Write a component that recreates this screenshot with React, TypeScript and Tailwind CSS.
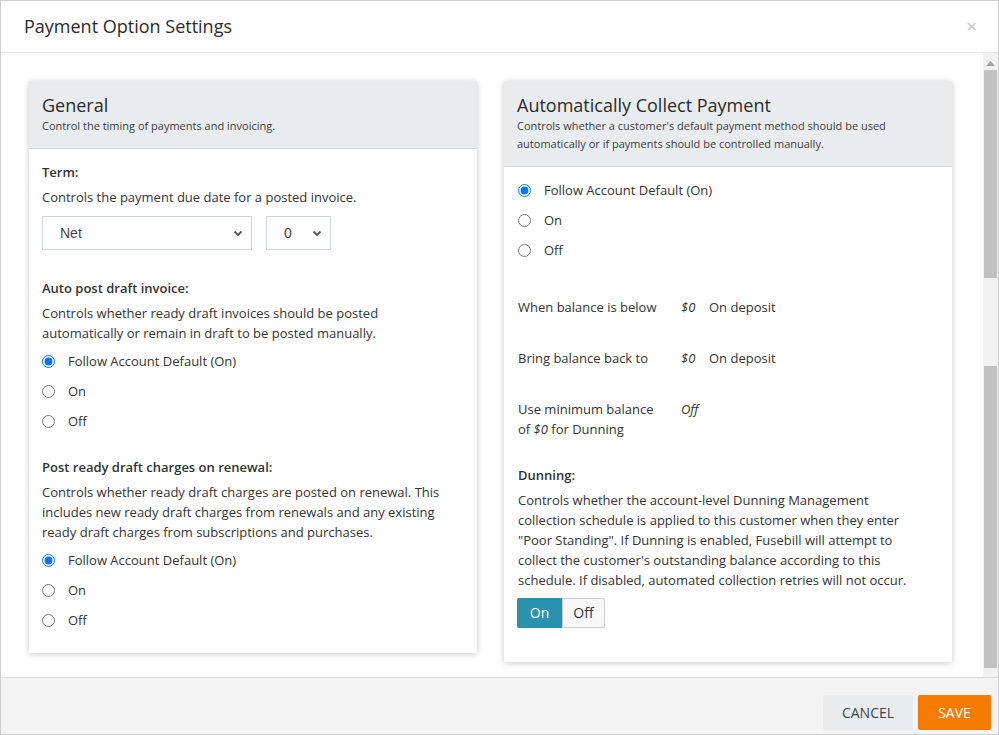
import React from 'react'

const font = { fontFamily: '"Open Sans", "Noto Sans", sans-serif' }

function Radio({ label, checked = false }: { label: string; checked?: boolean }) {
  return (
    <label className="flex h-[30px] items-center">
      <input
        type="radio"
        defaultChecked={checked}
        className="m-0 h-[13px] w-[13px] shrink-0 accent-[#0075ff]"
      />
      <span className="ml-[13px] text-[13px] text-[#333]">{label}</span>
    </label>
  )
}

function Select({ value, width }: { value: string; width: string }) {
  return (
    <div
      className={`flex h-[34px] items-center justify-between border border-[#ced4da] bg-white pl-[17px] pr-[7px] ${width}`}
    >
      <span className="text-[14px] text-[#444] [font-family:'Liberation_Sans',Arial,sans-serif]">{value}</span>
      <svg width="12" height="12" viewBox="0 0 12 12" className="text-[#555]">
        <path d="M2.5 4.5 L6 8 L9.5 4.5" fill="none" stroke="currentColor" strokeWidth="1.8" />
      </svg>
    </div>
  )
}

function CardHeader({ title, children }: { title: string; children: React.ReactNode }) {
  return (
    <div className="border-b border-[#d3d9de] bg-[#e9ecef] px-[13px] pt-[12px] pb-[13px]">
      <h2 className="text-[18px] leading-[24px] text-[#2b2b2b]">{title}</h2>
      <p className="text-[11px] leading-[18px] text-[#3d3d3d]">{children}</p>
    </div>
  )
}

export default function App() {
  return (
    <div style={font} className="flex h-[735px] w-[999px] flex-col border border-[#cfcfcf] bg-white text-[#333]">
      {/* header */}
      <div className="flex h-[52px] shrink-0 items-center justify-between border-b border-[#e5e5e5] pl-[23px] pr-[21px]">
        <h1 className="text-[18px] text-[#2b2b2b]">Payment Option Settings</h1>
        <span className="text-[19px] leading-none text-[#c4c4c4]">×</span>
      </div>

      {/* body */}
      <div className="flex min-h-0 flex-1">
        <div className="flex flex-1 gap-[27px] pl-[28px] pt-[28px]">
          {/* General */}
          <div className="h-[572px] w-[448px] bg-white shadow-[0_1px_6px_rgba(0,0,0,0.22)]">
            <CardHeader title="General">Control the timing of payments and invoicing.</CardHeader>
            <div className="px-[13px] pt-[13px] text-[13px] leading-[20px]">
              <p className="font-semibold">Term:</p>
              <p className="mt-[5px]">Controls the payment due date for a posted invoice.</p>
              <div className="mt-[9px] flex gap-[14px]">
                <Select value="Net" width="w-[210px]" />
                <Select value="0" width="w-[65px]" />
              </div>

              <p className="mt-[28px] font-semibold">Auto post draft invoice:</p>
              <p className="mt-[5px]">
                Controls whether ready draft invoices should be posted
                <br />
                automatically or remain in draft to be posted manually.
              </p>
              <div className="mt-[3px]">
                <Radio label="Follow Account Default (On)" checked />
                <Radio label="On" />
                <Radio label="Off" />
              </div>

              <p className="mt-[21px] font-semibold">Post ready draft charges on renewal:</p>
              <p className="mt-[5px]">
                Controls whether ready draft charges are posted on renewal. This
                <br />
                includes new ready draft charges from renewals and any existing
                <br />
                ready draft charges from subscriptions and purchases.
              </p>
              <div className="mt-[3px]">
                <Radio label="Follow Account Default (On)" checked />
                <Radio label="On" />
                <Radio label="Off" />
              </div>
            </div>
          </div>

          {/* Automatically Collect Payment */}
          <div className="h-[581px] w-[448px] bg-white shadow-[0_1px_6px_rgba(0,0,0,0.22)]">
            <CardHeader title="Automatically Collect Payment">
              Controls whether a customer's default payment method should be used
              <br />
              automatically or if payments should be controlled manually.
            </CardHeader>
            <div className="px-[14px] pt-[8px] text-[13px] leading-[20px]">
              <div>
                <Radio label="Follow Account Default (On)" checked />
                <Radio label="On" />
                <Radio label="Off" />
              </div>

              <div className="mt-[32px] flex">
                <span className="w-[163px]">When balance is below</span>
                <span className="w-[28px] italic">$0</span>
                <span>On deposit</span>
              </div>
              <div className="mt-[31px] flex">
                <span className="w-[163px]">Bring balance back to</span>
                <span className="w-[28px] italic">$0</span>
                <span>On deposit</span>
              </div>
              <div className="mt-[31px] flex">
                <span className="w-[163px]">
                  Use minimum balance
                  <br />
                  of <i>$0</i> for Dunning
                </span>
                <span className="italic">Off</span>
              </div>

              <p className="mt-[26px] font-semibold">Dunning:</p>
              <p className="mt-[5px]">
                Controls whether the account-level Dunning Management
                <br />
                collection schedule is applied to this customer when they enter
                <br />
                "Poor Standing". If Dunning is enabled, Fusebill will attempt to
                <br />
                collect the customer's outstanding balance according to this
                <br />
                schedule. If disabled, automated collection retries will not occur.
              </p>
              <div className="mt-[8px] -ml-px flex h-[30px] w-fit text-[14px]">
                <span className="flex w-[45px] items-center justify-center rounded-l-[2px] bg-[#2b92ad] text-white">
                  On
                </span>
                <span className="flex w-[43px] items-center justify-center rounded-r-[2px] border border-[#cdcdcd] bg-[#f9f9f9] text-[#333]">
                  Off
                </span>
              </div>
            </div>
          </div>
        </div>

        {/* scrollbar */}
        <div className="flex w-[15px] shrink-0 flex-col items-center bg-[#f1f1f1] pt-[8px]">
          <svg width="9" height="5" viewBox="0 0 9 5">
            <path d="M0 5 L4.5 0 L9 5 Z" fill="#a3a3a3" />
          </svg>
          <div className="mt-[4px] h-[208px] w-[13px] bg-[#c1c1c1]" />
          <div className="h-[88px]" />
          <div className="h-[302px] w-[13px] bg-[#c1c1c1]" />
        </div>
      </div>

      {/* footer */}
      <div className="flex h-[57px] shrink-0 items-start justify-end gap-[5px] border-t border-[#dcdcdc] bg-[#f4f4f4] pr-[7px] pt-[17px]">
        <button className="h-[35px] w-[90px] rounded-[2px] bg-[#e9ecef] text-[14px] text-[#3a4450]">CANCEL</button>
        <button className="h-[35px] w-[73px] rounded-[2px] bg-[#f57c00] text-[14px] text-white">SAVE</button>
      </div>
    </div>
  )
}
